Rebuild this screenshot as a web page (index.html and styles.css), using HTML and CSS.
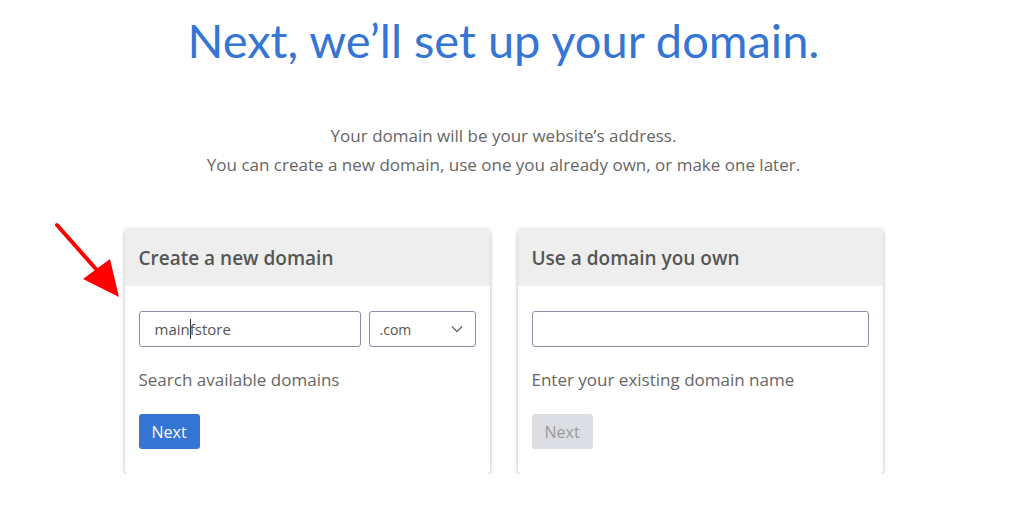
FILE: index.html
```html
<!DOCTYPE html>
<html lang="en">
  <head>
    <meta charset="UTF-8" />
    <meta name="viewport" content="width=device-width, initial-scale=1.0" />
    <title>Set up your domain</title>
    <link rel="stylesheet" href="styles.css">
  </head>
  <body>
    <main class="page">
      <h1 class="title">Next, we’ll set up your domain.</h1>

      <p class="intro">
        Your domain will be your website’s address.<br />
        You can create a new domain, use one you already own, or make one later.
      </p>

      <div class="cards">
        <!-- pointer arrow beside the first card -->
        <svg class="arrow" width="80" height="90" viewBox="0 0 80 90">
          <line x1="4" y1="4" x2="50" y2="56" stroke="#f00" stroke-width="4" stroke-linecap="round" />
          <polygon points="30,58 66,76 57,38" fill="#f00" />
        </svg>

        <section class="card">
          <div class="card-head">Create a new domain</div>
          <div class="card-body">
            <div class="field-row">
              <div class="input input-name">main<span class="caret"></span>fstore</div>
              <div class="input select">
                <span>.com</span>
                <svg width="12" height="8" viewBox="0 0 12 8">
                  <polyline points="1,1.5 6,6.5 11,1.5" fill="none" stroke="#666" stroke-width="1.3" />
                </svg>
              </div>
            </div>
            <p class="hint">Search available domains</p>
            <button class="btn" type="button">Next</button>
          </div>
        </section>

        <section class="card">
          <div class="card-head">Use a domain you own</div>
          <div class="card-body">
            <div class="field-row">
              <div class="input input-full"></div>
            </div>
            <p class="hint">Enter your existing domain name</p>
            <button class="btn btn-disabled" type="button" disabled>Next</button>
          </div>
        </section>
      </div>
    </main>
  </body>
</html>
```

FILE: styles.css
```css
body {
  margin: 0;
  background: #fff;
  font-family: "Open Sans", Arial, sans-serif;
}

.page {
  width: 1007px;
  display: flex;
  flex-direction: column;
  align-items: center;
}

.title {
  margin: 10px 0 0;
  font-family: Lato, "Open Sans", sans-serif;
  font-weight: 400;
  font-size: 47px;
  line-height: 60px;
  color: #3575d3;
}

.intro {
  margin: 51px 0 0;
  text-align: center;
  font-size: 17px;
  line-height: 29px;
  color: #666;
}

.cards {
  position: relative;
  display: flex;
  gap: 28px;
  margin-top: 50px;
}

.arrow {
  position: absolute;
  left: -72px;
  top: -8px;
}

.card {
  width: 365px;
  height: 245px;
  background: #fff;
  border-radius: 4px;
  box-shadow: 0 1px 4px rgba(0, 0, 0, 0.3);
  overflow: hidden;
}

.card-head {
  height: 57px;
  padding: 0 14px;
  display: flex;
  align-items: center;
  background: #eeeeee;
  font-size: 19px;
  font-weight: 600;
  color: #555;
}

.card-body {
  padding: 25px 14px 0;
}

.field-row {
  display: flex;
  gap: 8px;
}

.input {
  height: 36px;
  box-sizing: border-box;
  border: 1px solid #8790a3;
  border-radius: 3px;
  display: flex;
  align-items: center;
  font-size: 15px;
  color: #555;
}

.input-name {
  width: 222px;
  padding-left: 15px;
}

.caret {
  display: inline-block;
  width: 1px;
  height: 20px;
  background: #333;
  margin-right: -1px;
}

.select {
  width: 107px;
  padding: 0 12px 0 10px;
  justify-content: space-between;
  font-size: 14px;
}

.input-full {
  width: 337px;
}

.hint {
  margin: 22px 0 0;
  font-size: 17px;
  line-height: 22px;
  color: #666;
}

.btn {
  margin-top: 23px;
  height: 35px;
  padding: 0 13px;
  border: 0;
  border-radius: 3px;
  background: #3575d3;
  font-family: "Open Sans", Arial, sans-serif;
  font-size: 16px;
  color: #fff;
}

.btn-disabled {
  background: #dcdee3;
  color: #999;
}
```
